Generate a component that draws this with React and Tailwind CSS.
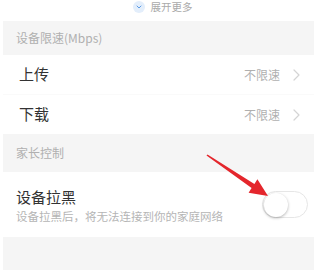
import React from 'react';

const font = { fontFamily: '"Noto Sans CJK SC", "Noto Sans", sans-serif' };

const Chevron = () => (
    <svg width="7" height="12" viewBox="0 0 7 12" fill="none">
        <path d="M1 1l5 5-5 5" stroke="#d4d4d4" strokeWidth="1.2" strokeLinecap="round" strokeLinejoin="round" />
    </svg>
);

const Row = ({ label }) => (
    <div className="h-[39px] flex items-center justify-between pl-4 pr-[14px] bg-white">
        <span className="text-[15px] text-[#333]">{label}</span>
        <div className="flex items-center gap-[13px]">
            <span className="text-[12px] text-[#b0b0b0]">不限速</span>
            <Chevron />
        </div>
    </div>
);

const App = () => {
    return (
        <div className="relative w-[314px] h-[270px] overflow-hidden bg-[#f5f5f5] border-l-[3px] border-white" style={font}>
            <div className="h-[21px] bg-white flex items-start justify-center gap-[6px] pl-[8px] pt-[1px]">
                <div className="w-[12px] h-[12px] rounded-full bg-[#e3eefb] flex items-center justify-center">
                    <svg width="6" height="4" viewBox="0 0 6 4" fill="none">
                        <path d="M1 1l2 2 2-2" stroke="#5b9be6" strokeWidth="1" strokeLinecap="round" strokeLinejoin="round" />
                    </svg>
                </div>
                <span className="text-[10.5px] leading-[12px] text-[#aaa]">展开更多</span>
            </div>

            <div className="h-[34px] flex items-center pl-[13px] text-[12px] text-[#b0b0b0]">设备限速(Mbps)</div>
            <Row label="上传" />
            <div className="h-px bg-[#fafafa]" />
            <Row label="下载" />

            <div className="h-[38px] flex items-center pl-[13px] text-[12px] text-[#b0b0b0]">家长控制</div>

            <div className="h-[65px] bg-white flex items-center justify-between pl-[13px] pr-[6px]">
                <div className="flex flex-col pt-[2px]">
                    <span className="text-[15px] leading-[20px] text-[#333]">设备拉黑</span>
                    <span className="text-[11.5px] leading-[18px] text-[#b5b5b5]">设备拉黑后，将无法连接到你的家庭网络</span>
                </div>
                <div className="w-[46px] h-[27px] rounded-full border border-[#e6e6e6] bg-white flex items-center px-[1px]">
                    <div className="w-[24px] h-[24px] rounded-full bg-white shadow-[0_1px_3px_rgba(0,0,0,0.3)]" />
                </div>
            </div>

            <svg className="absolute left-0 top-0 pointer-events-none" width="314" height="270" viewBox="0 0 314 270">
                <polygon
                    points="203.5,155.4 204.5,154.6 251.4,183.9 254.4,179.3 265,196 245.6,192.7 248.6,188.1"
                    fill="#e4262c"
                />
            </svg>
        </div>
    );
};

export default App;
